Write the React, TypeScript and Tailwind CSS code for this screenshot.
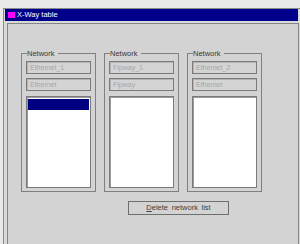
import React from "react";

const groups = [
  { name: "Ethernet_1", type: "Ethernet", selected: true },
  { name: "Fipway_1", type: "Fipway", selected: false },
  { name: "Ethernet_2", type: "Ethernet", selected: false },
];

function Field({ text }: { text: string }) {
  return (
    <div className="h-[13px] w-[65px] border border-[#7a7a7a] shadow-[inset_1px_1px_0_#b4b4b4] bg-[#d4d4d4] pl-[3px] text-[7px] leading-[11px] text-[#a6a6a6] whitespace-nowrap overflow-hidden">
      {text}
    </div>
  );
}

export default function App() {
  return (
    <div
      className="w-[300px] h-[244px] overflow-hidden bg-[#e9e9e9] pt-[8px] pl-[3px]"
      style={{ fontFamily: '"Liberation Sans", Arial, sans-serif' }}
    >
      <div className="h-[236px] w-[297px] border-l border-t border-[#8a8a8a] bg-[#d9d9d9] flex flex-col">
        <div className="ml-[1px] mr-[2px] h-[12px] bg-[#00008b] flex items-center">
          <div className="ml-[3px] w-[7px] h-[6px] bg-[#ff00ff]" />
          <span className="ml-[2px] text-[7.5px] leading-[12px] text-white whitespace-nowrap">
            X-Way table
          </span>
        </div>
        <div className="mt-[2px] ml-[3px] mr-[1px] flex-1 border-l border-t border-r border-[#858585] bg-[#d3d3d3] pt-[25px] pl-[13px]">
          <div className="flex gap-[8px]">
            {groups.map((g, i) => (
              <fieldset
                key={i}
                className="w-[75px] min-w-0 border border-[#808080] px-[4px] pt-[3px] pb-[3px] m-0"
              >
                <legend className="ml-[1px] pr-[3px] text-[7.5px] leading-[9px] text-[#3a3a3a]">
                  Network
                </legend>
                <Field text={g.name} />
                <div className="mt-[4px]">
                  <Field text={g.type} />
                </div>
                <div className="mt-[5px] h-[92px] w-[65px] border border-[#7a7a7a] shadow-[inset_1px_1px_0_#9a9a9a] bg-white pt-[2px] px-[1px]">
                  {g.selected && <div className="h-[11px] bg-[#000080]" />}
                </div>
              </fieldset>
            ))}
          </div>
          <div className="mt-[9px] ml-[107px] w-[101px] h-[14px] border border-[#6e6e6e] bg-[#d3d3d3] flex items-center justify-center text-[7.5px] leading-[12px] text-[#404040] whitespace-nowrap [word-spacing:1.5px]">
            <span>
              <span className="underline">D</span>elete network list
            </span>
          </div>
        </div>
      </div>
    </div>
  );
}
